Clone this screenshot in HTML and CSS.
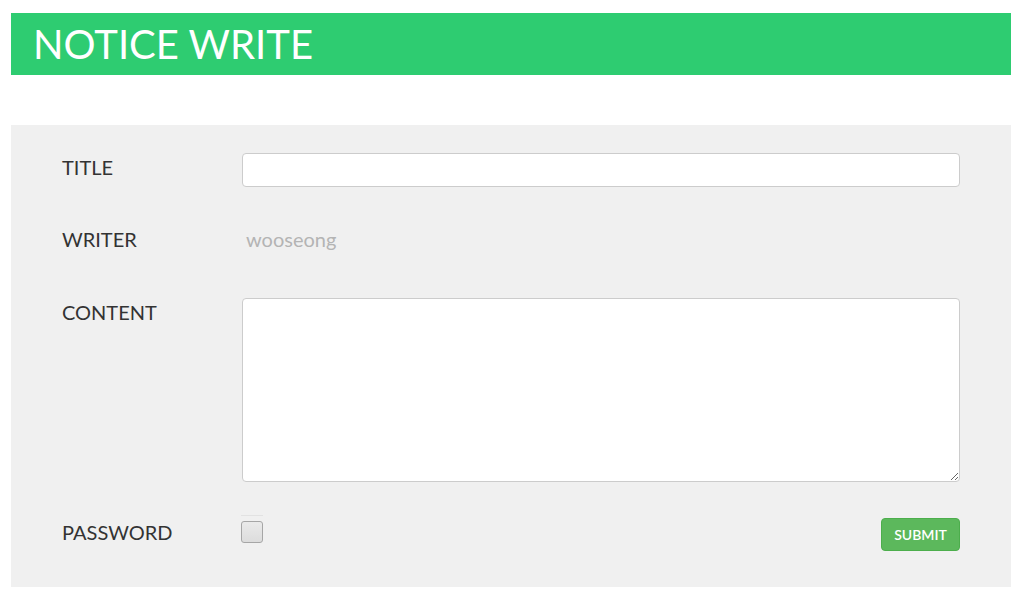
FILE: index.html
```html
<!DOCTYPE html>
<html lang="en">
<head>
    <meta charset="UTF-8">
    <meta name="viewport" content="width=device-width, initial-scale=1.0">
    <title>Notice Write</title>
    <link rel="stylesheet" href="styles.css">
</head>
<body>
<div class="page">
    <h1 class="page-title">NOTICE WRITE</h1>

    <form class="write-form">
        <div class="form-row">
            <label for="title" class="form-label">TITLE</label>
            <input type="text" id="title" class="form-control">
        </div>
        <div class="form-row form-row-writer">
            <span class="form-label">WRITER</span>
            <span class="writer-name">wooseong</span>
        </div>
        <div class="form-row form-row-content">
            <label for="content" class="form-label">CONTENT</label>
            <textarea id="content" class="form-control form-textarea"></textarea>
        </div>
        <div class="form-row form-row-last">
            <span class="form-label">PASSWORD</span>
            <div class="form-bottom">
                <span class="check-wrap"><span class="check-box"></span></span>
                <button type="button" class="btn-submit">SUBMIT</button>
            </div>
        </div>
    </form>
</div>
</body>
</html>
```

FILE: styles.css
```css
body {
    margin: 0;
    font-family: Lato, "Open Sans", Arial, sans-serif;
    background-color: #ffffff;
    color: #333333;
}
.page {
    width: 1000px;
    margin: 13px 11px;
}
.page-title {
    margin: 0;
    height: 62px;
    padding-left: 22px;
    background-color: #2ecc71;
    color: #ffffff;
    font-size: 40px;
    font-weight: 400;
    line-height: 62px;
}
.write-form {
    margin-top: 50px;
    background-color: #f0f0f0;
    padding: 28px 51px 36px 51px;
}
.form-row {
    display: grid;
    grid-template-columns: 180px 1fr;
    align-items: start;
    margin-bottom: 38px;
}
.form-row-writer {
    margin-bottom: 45px;
}
.form-row-content {
    margin-bottom: 36px;
}
.form-row-last {
    margin-bottom: 0;
}
.form-label {
    font-size: 20px;
    line-height: 28px;
    color: #333333;
}
.form-control {
    display: block;
    width: 100%;
    height: 34px;
    box-sizing: border-box;
    border: 1px solid #cccccc;
    border-radius: 4px;
    background-color: #ffffff;
    padding: 6px 12px;
    font-family: inherit;
    font-size: 14px;
    margin: 0;
}
.form-textarea {
    height: 184px;
    resize: both;
}
.writer-name {
    padding-left: 4px;
    font-size: 20px;
    line-height: 28px;
    color: #b4b4b4;
}
.form-bottom {
    display: flex;
    justify-content: space-between;
    align-items: flex-start;
}
.check-wrap {
    display: block;
    margin-top: -3px;
    margin-left: -1px;
    padding-top: 5px;
    border-top: 1px solid #e2e2e2;
}
.check-box {
    display: block;
    width: 20px;
    height: 20px;
    border: 1px solid #a6a6a6;
    border-radius: 3px;
    background: linear-gradient(#eaeaea, #dcdcdc);
}
.btn-submit {
    width: 79px;
    height: 33px;
    background-color: #5cb85c;
    border: 1px solid #4cae4c;
    border-radius: 4px;
    color: #ffffff;
    font-family: inherit;
    font-size: 14px;
    font-weight: 600;
    cursor: pointer;
    padding: 0;
}
```
